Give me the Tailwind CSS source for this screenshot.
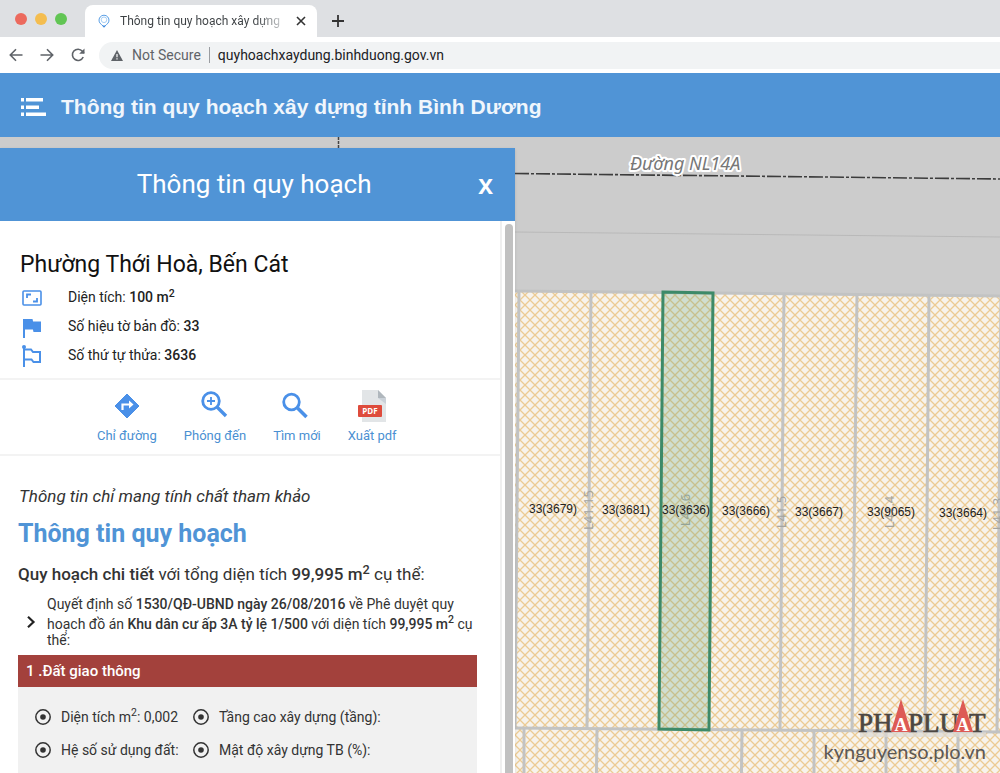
<!DOCTYPE html>
<html lang="vi">

<head>
    <meta charset="UTF-8" />
    <meta name="viewport" content="width=device-width, initial-scale=1.0" />
    <title>Thông tin quy hoạch xây dựng tỉnh Bình Dương</title>
    <script src="https://cdn.jsdelivr.net/npm/@tailwindcss/browser@4"></script>
</head>

<body class="flex h-screen flex-col overflow-hidden bg-white font-['Roboto',sans-serif] text-[#222]">
    <!-- browser tabs -->
    <div class="flex h-[37px] shrink-0 items-end bg-[#dee0e3]">
        <div class="flex h-full items-center gap-2 pl-[15px] pr-[18px]">
            <span class="size-3 rounded-full bg-[#ec6a5e]"></span>
            <span class="size-3 rounded-full bg-[#f4bd4f]"></span>
            <span class="size-3 rounded-full bg-[#61c554]"></span>
        </div>
        <div class="flex h-8 w-[232px] items-center rounded-t-lg bg-white pl-3 pr-2">
            <svg class="mr-[9px] size-[14px] shrink-0" viewBox="0 0 14 14" fill="none" stroke="#5a9fe6">
                <path d="M7 13.2 4.6 10.6A5 5 0 1 1 9.4 10.6Z" />
                <circle cx="7" cy="5.8" r="2.8" stroke="#a9d0f5" />
                <path d="M5.2 11.4h3.6L7 13.4z" fill="#3d86dc" stroke="none" />
            </svg>
            <span class="whitespace-nowrap bg-linear-to-r from-[#3c4043] from-85% to-[#c4c6c8] bg-clip-text text-[12px] leading-5 text-transparent">Thông tin quy hoạch xây dựng</span>
            <button class="ml-auto flex size-4 items-center justify-center" aria-label="Close tab">
                <svg class="size-[10px]" viewBox="0 0 10 10" stroke="#333" stroke-width="1.6">
                    <path d="M1 1l8 8M9 1L1 9" />
                </svg>
            </button>
        </div>
        <button class="flex h-8 w-[42px] items-center justify-center" aria-label="New tab">
            <svg class="size-3" viewBox="0 0 12 12" stroke="#333" stroke-width="1.8">
                <path d="M6 0v12M0 6h12" />
            </svg>
        </button>
    </div>

    <!-- address bar -->
    <div class="flex h-9 shrink-0 items-center bg-white pl-2">
        <button class="mr-[15px] size-4" aria-label="Back">
            <svg viewBox="0 0 16 16" fill="none" stroke="#5f6368" stroke-width="1.6">
                <path d="M14.5 8H2.5M8 2.3 2.3 8 8 13.7" />
            </svg>
        </button>
        <button class="mr-[15px] size-4" aria-label="Forward">
            <svg viewBox="0 0 16 16" fill="none" stroke="#5f6368" stroke-width="1.6">
                <path d="M1.5 8h12M8 2.3 13.7 8 8 13.7" />
            </svg>
        </button>
        <button class="mr-[13px] size-4" aria-label="Reload">
            <svg viewBox="0 0 16 16" fill="none" stroke="#5f6368" stroke-width="1.6">
                <path d="M13.2 10A5.6 5.6 0 1 1 12.4 4.3L14 6" />
                <path d="M14.5 1.5v5.3H9.2z" fill="#5f6368" stroke="none" />
            </svg>
        </button>
        <div class="flex h-[27px] grow items-center rounded-l-full bg-[#f1f3f4] pl-3 text-[14px] font-['Roboto',sans-serif]">
            <svg class="mr-[9px] h-[11px] w-3" viewBox="0 0 12 11">
                <path d="M6 0l6 11H0z" fill="#5f6368" />
                <path d="M6 4v3.2M6 8.2v1.3" stroke="#fff" stroke-width="1.2" />
            </svg>
            <span class="text-[#5f6368]">Not Secure</span>
            <span class="mx-2 h-4 w-px bg-[#9a9da1]"></span>
            <span class="text-[#202124]">quyhoachxaydung.binhduong.gov.vn</span>
        </div>
    </div>

    <!-- site header -->
    <header class="flex h-16 shrink-0 items-center gap-[15px] bg-[#5094d6] pl-5 pt-1">
        <button aria-label="Menu">
            <svg class="h-[18px] w-[26px]" viewBox="0 0 26 18" fill="#fff">
                <path d="M1 0h3v3.500H1zM6 0h17v3.500H6zM1 7.500h3v3.500H1zM6 7.500h13v3.500H6zM1 14.500h3v3.500H1zM6 14.500h20v3.500H6z" />
            </svg>
        </button>
        <h1 class="whitespace-nowrap text-[21px] font-bold text-[#f0f6fc] font-['Liberation_Sans',sans-serif]">Thông tin quy hoạch xây dựng tỉnh Bình Dương</h1>
    </header>

    <main class="relative flex min-h-0 grow pt-[11px]">
        <!-- map -->
        <svg class="absolute inset-0 h-full w-full bg-[#ccc]" font-family="Liberation Sans, sans-serif">
            <defs>
                <pattern id="hatch" width="10" height="10" patternUnits="userSpaceOnUse">
                    <rect width="10" height="10" fill="#f7f3ec" />
                    <path d="M-1 -1l12 12M-1 11l12-12" stroke="#eccb93" stroke-width="1.300" />
                </pattern>
            </defs>
            <g transform="translate(0 -137)">
                <path d="M0 289 515 291 1000 296 2000 306V2000H0Z" fill="url(#hatch)" />
                <g fill="none" stroke="#c2c3c3" stroke-width="3">
                    <path d="M0 289 515 291 1000 296 2000 306M0 725 515 728 1000 732 2000 740" />
                    <path d="M519 291l-4 437M591 292l-4 437M784 293l-4 437M857 294l-5 437M929 295l-4 437M1001 296l-4 436" />
                    <path d="M524 729v80M597 729l-1 80M742 730l-1 80M814 731v80M886 731v80M958 732v80" />
                </g>
                <path d="M0 230 515 232 1000 237 2000 247" fill="none" stroke="#b9b9b9" />
                <path d="M338.500 137v12" stroke="#444" stroke-width="1.500" stroke-dasharray="3 1" />
                <path d="M515 173.500 1000 179 2000 190" fill="none" stroke="#3c3c3c" stroke-width="1.600" stroke-dasharray="14 2 3 2" />
                <text x="630" y="170" font-family="Noto Sans, sans-serif" font-size="18" font-style="italic" fill="#777" stroke="#fff" stroke-width="4" stroke-linejoin="round" paint-order="stroke">Đường NL14A</text>

                <!-- lot codes -->
                <g font-family="Noto Sans, sans-serif" font-size="13" fill="#a4a4a0" text-anchor="middle">
                    <text transform="translate(593 510) rotate(-90)">L41.15</text>
                    <text transform="translate(690 510) rotate(-90)">L41.6</text>
                    <text transform="translate(786 512) rotate(-90)">L41.5</text>
                    <text transform="translate(894 512) rotate(-90)">L41.4</text>
                    <text transform="translate(1002 514) rotate(-90)">L41.3</text>
                </g>

                <path d="M663 292l50 1-4 437-50-1Z" fill="#5aa07c" fill-opacity=".25" stroke="#3d8a68" stroke-width="3" />

                <g font-size="12" fill="#222" text-anchor="middle">
                    <text x="553" y="513">33(3679)</text>
                    <text x="626" y="514">33(3681)</text>
                    <text x="686" y="514">33(3636)</text>
                    <text x="746" y="515">33(3666)</text>
                    <text x="819" y="516">33(3667)</text>
                    <text x="891" y="516">33(9065)</text>
                    <text x="963" y="517">33(3664)</text>
                </g>
            </g>
        </svg>

        <!-- planning panel -->
        <section class="relative flex w-[515px] max-w-full flex-col bg-white shadow">
            <div class="flex h-[73px] shrink-0 items-center bg-[#5094d6] text-white">
                <h2 class="grow pl-[30px] text-center text-[26px]">Thông tin quy hoạch</h2>
                <button class="mr-[22px] font-['Noto_Sans',sans-serif] text-[22px] font-bold leading-none" aria-label="Đóng">X</button>
            </div>
            <div class="flex min-h-0 grow">
                <div class="min-w-0 grow overflow-hidden">
                    <div class="pb-2 pl-5 pt-7">
                        <h3 class="mb-[2px] text-[23px] leading-8 text-[#111]">Phường Thới Hoà, Bến Cát</h3>
                        <ul class="text-[14px] leading-[29px]">
                            <li class="flex items-center gap-[25px]">
                                <svg class="h-6 w-[23px]" viewBox="0 0 23 24" fill="none" stroke="#4a90e8">
                                    <rect x="3" y="5" width="18" height="14" rx="1" stroke-width="1.600" />
                                    <path d="M7 12V8.500h4M17 12v3.500h-4" stroke-width="1.800" />
                                </svg>
                                <span>Diện tích: <b class="font-medium">100 m<sup>2</sup></b></span>
                            </li>
                            <li class="flex items-center gap-[25px]">
                                <svg class="h-6 w-[23px]" viewBox="0 0 23 24" fill="#4a90e8">
                                    <path d="M3 4h9.500l.6 2.500H21V17h-7.500l-.6-2.500H5V23H3z" />
                                </svg>
                                <span>Số hiệu tờ bản đồ: <b class="font-medium">33</b></span>
                            </li>
                            <li class="flex items-center gap-[25px]">
                                <svg class="h-6 w-[23px]" viewBox="0 0 23 24" fill="none" stroke="#4a90e8" stroke-width="2">
                                    <path d="M4 2v21M4 5.500h7l2 2.500h7v10h-6.500l-2-2.500H4" />
                                    <circle cx="4" cy="3" r="2" fill="#4a90e8" stroke="none" />
                                </svg>
                                <span>Số thứ tự thửa: <b class="font-medium">3636</b></span>
                            </li>
                        </ul>
                    </div>

                    <div class="flex gap-[27px] border-y-2 border-[#f3f3f3] pb-2 pl-[97px] pt-[10px] text-[13px] leading-5 text-[#4a90d2]">
                        <button class="flex flex-col items-center gap-1">
                            <svg class="size-8" viewBox="0 0 32 32">
                                <path d="M16 4 28 16 16 28 4 16z" fill="#4a90e8" stroke="#4a90e8" stroke-linejoin="round" />
                                <path d="M11.500 20v-5.500h7" fill="none" stroke="#fff" stroke-width="2.200" />
                                <path d="M18 10.500l4.500 4-4.500 4z" fill="#fff" />
                            </svg>
                            Chỉ đường
                        </button>
                        <button class="flex flex-col items-center gap-1">
                            <svg class="size-8" viewBox="0 0 32 32" fill="none" stroke="#4a90e8">
                                <circle cx="12" cy="11" r="8.300" stroke-width="2.800" />
                                <path d="M18 17l9 9" stroke-width="3.400" />
                                <path d="M12 7v8M8 11h8" stroke-width="1.800" />
                            </svg>
                            Phóng đến
                        </button>
                        <button class="flex flex-col items-center gap-1">
                            <svg class="size-8" viewBox="0 0 32 32" fill="none" stroke="#4a90e8">
                                <circle cx="10.500" cy="12" r="7.800" stroke-width="2.800" />
                                <path d="M16.500 18l9 9" stroke-width="3.600" />
                            </svg>
                            Tìm mới
                        </button>
                        <button class="flex flex-col items-center gap-1">
                            <svg class="size-8" viewBox="0 0 32 32">
                                <path d="M6 0h16l8 8v24H6z" fill="#e2e5e7" />
                                <path d="M22 0l8 8h-8z" fill="#b0b7bd" />
                                <path d="M22 8h8v6z" fill="#cad1d8" />
                                <rect x="2" y="15" width="24" height="12" rx="1" fill="#de4b3c" />
                                <text x="14" y="24" text-anchor="middle" font-size="8" font-weight="bold" fill="#fff" font-family="Open Sans, sans-serif">PDF</text>
                            </svg>
                            Xuất pdf
                        </button>
                    </div>

                    <div class="px-[18px] pt-7 text-[#333]">
                        <p class="pl-px text-[17px] italic leading-6">Thông tin chỉ mang tính chất tham khảo</p>
                        <h3 class="mt-[10px] text-[25px] font-bold leading-8 text-[#5094d6]">Thông tin quy hoạch</h3>
                        <p class="mt-3 text-[17px] leading-6"><b class="font-medium">Quy hoạch chi tiết</b> với tổng diện tích <b class="font-medium">99,995 m<sup>2</sup></b> cụ thể:</p>
                        <div class="mt-[10px] flex items-center pb-[7px] pr-2">
                            <svg class="ml-2 mr-[11px] h-3 w-[10px] shrink-0" viewBox="0 0 10 12" fill="none" stroke="#222" stroke-width="2.200">
                                <path d="M2 .8 7.500 6 2 11.200" />
                            </svg>
                            <p class="text-[14px] leading-4">Quyết định số <b class="font-medium">1530/QĐ-UBND ngày 26/08/2016</b> về Phê duyệt quy hoạch đồ án <b class="font-medium">Khu dân cư ấp 3A tỷ lệ 1/500</b> với diện tích <b class="font-medium">99,995 m<sup class="static align-super leading-4">2</sup></b> cụ thể:</p>
                        </div>
                        <h4 class="mr-[5px] bg-[#a3413c] pl-2 text-[15px] font-medium leading-8 text-white">1 .Đất giao thông</h4>
                        <ul class="mr-[5px] grid grid-cols-[158px_1fr] gap-y-px bg-[#f1f1f1] pb-10 pl-4 pt-[14px] text-[14px] leading-8">
                            <li class="flex items-center gap-[9px]">
                                <svg class="size-[18px]" viewBox="0 0 18 18"><circle cx="9" cy="9" r="7.200" fill="none" stroke="#333" stroke-width="1.500" /><circle cx="9" cy="9" r="2.800" fill="#333" /></svg>
                                <span>Diện tích m<sup>2</sup>: 0,002</span>
                            </li>
                            <li class="flex items-center gap-[9px]">
                                <svg class="size-[18px]" viewBox="0 0 18 18"><circle cx="9" cy="9" r="7.200" fill="none" stroke="#333" stroke-width="1.500" /><circle cx="9" cy="9" r="2.800" fill="#333" /></svg>
                                <span>Tầng cao xây dựng (tầng):</span>
                            </li>
                            <li class="flex items-center gap-[9px]">
                                <svg class="size-[18px]" viewBox="0 0 18 18"><circle cx="9" cy="9" r="7.200" fill="none" stroke="#333" stroke-width="1.500" /><circle cx="9" cy="9" r="2.800" fill="#333" /></svg>
                                <span>Hệ số sử dụng đất:</span>
                            </li>
                            <li class="flex items-center gap-[9px]">
                                <svg class="size-[18px]" viewBox="0 0 18 18"><circle cx="9" cy="9" r="7.200" fill="none" stroke="#333" stroke-width="1.500" /><circle cx="9" cy="9" r="2.800" fill="#333" /></svg>
                                <span>Mật độ xây dựng TB (%):</span>
                            </li>
                        </ul>
                    </div>
                </div>
                <!-- scrollbar -->
                <div class="flex w-[15px] shrink-0 justify-center border-l-2 border-[#efefef] pt-[3px]">
                    <div class="h-full w-2 rounded-t-full bg-[#c1c1c1]"></div>
                </div>
            </div>
        </section>

        <!-- watermark -->
        <div class="absolute bottom-[10px] right-3 flex flex-col items-end">
            <svg class="h-10 w-[130px]" viewBox="0 0 130 40" font-family="Liberation Serif, serif" font-size="27" fill="#4c4743">
                <rect x="2" y="33" width="126" height="5" fill="#dcd8d4" fill-opacity=".7" />
                <g stroke="#4c4743" stroke-width=".7">
                    <text x="0" y="33">PH</text>
                    <text x="50" y="33">PLU</text>
                    <text x="111" y="33">T</text>
                </g>
                <path d="M43 0l10 33H33zM105 0l10 33H95z" fill="#dd5a55" />
                <g font-size="18" font-weight="bold" fill="#fff" text-anchor="middle">
                    <text x="43" y="32">A</text>
                    <text x="105" y="32">A</text>
                </g>
            </svg>
            <span class="mr-[2px] text-[20px] leading-6 text-[#5c5856] font-['Lato',sans-serif]">kynguyenso.plo.vn</span>
        </div>
    </main>
</body>

</html>
